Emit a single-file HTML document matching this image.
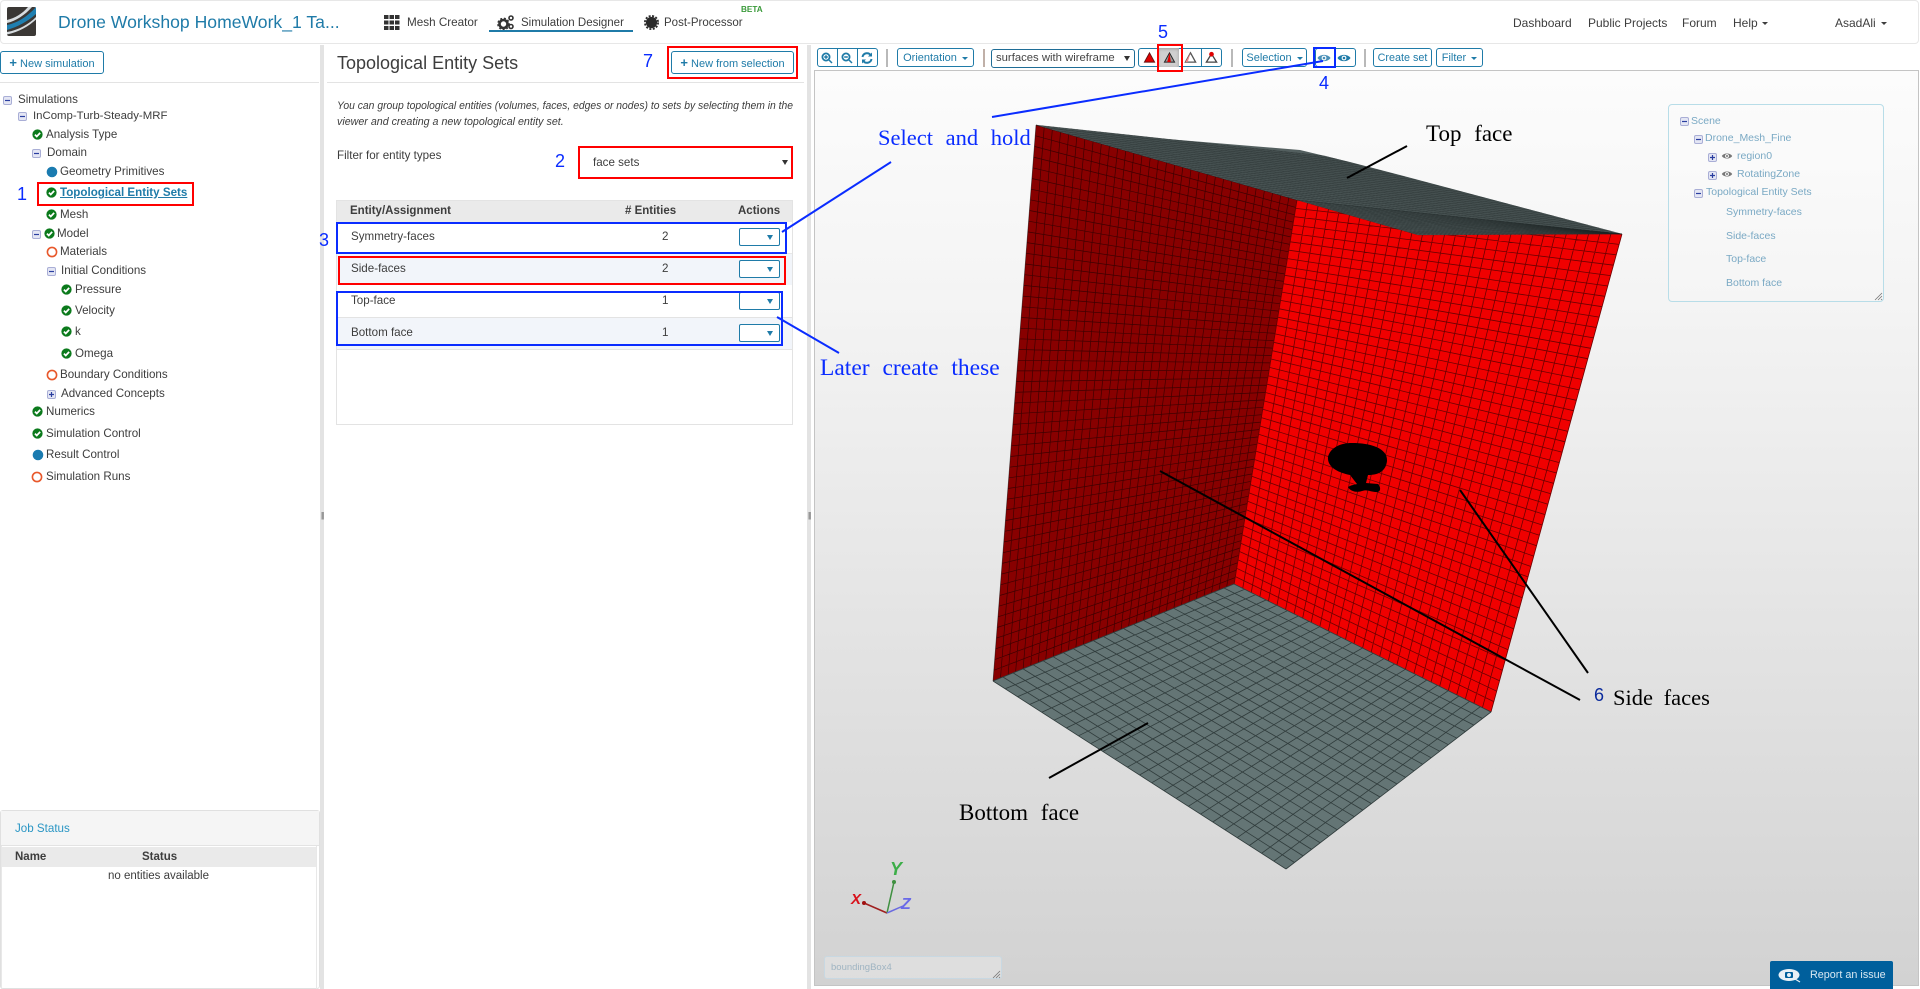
<!DOCTYPE html>
<html lang="en">
<head>
<meta charset="utf-8">
<title>Topological Entity Sets</title>
<style>
html,body{margin:0;padding:0;width:1920px;height:989px;overflow:hidden;background:#fff}
body{position:relative;font-family:"Liberation Sans",sans-serif;font-size:12px;color:#3d3d3d}
.a{position:absolute}
.t{position:absolute;white-space:nowrap;line-height:16px;height:16px}
.btn{position:absolute;box-sizing:border-box;border:1px solid #1f7ba8;border-radius:3px;color:#1f7ba8;background:#fff;white-space:nowrap;font-size:11px;text-align:center}
.ann{position:absolute;white-space:nowrap;font-family:"Liberation Serif",serif;line-height:26px;height:26px;font-size:22.500px;word-spacing:7px}
.num{position:absolute;white-space:nowrap;color:#0a2cff;font-size:18px;line-height:20px;height:20px}
.box{position:absolute;box-sizing:border-box;border:2px solid #0a2cff}
.red{border-color:#f00}
.dd{position:absolute;left:739px;width:41px;height:18px;box-sizing:border-box;border:1px solid #1f7ba8;border-radius:2px;background:#fff}
.dd:after{content:"";position:absolute;right:6px;top:6px;border-left:3px solid transparent;border-right:3px solid transparent;border-top:5px solid #1f7ba8}
.car{display:inline-block;width:0;height:0;border-left:3.5px solid transparent;border-right:3.5px solid transparent;border-top:3.5px solid currentColor;vertical-align:middle;margin-left:5px}
.sep{position:absolute;width:2px;height:18px;top:49px;background:#b9b9b9}
.lg{position:absolute;white-space:nowrap;color:#7aa9c4;font-size:10.5px;line-height:14px;height:14px}
.i{position:absolute;display:block}
</style>
</head>
<body>
<svg width="0" height="0" style="position:absolute">
<defs>
<symbol id="chk" viewBox="0 0 12 12"><circle cx="6" cy="6" r="5.6" fill="#0b7a1c"/><path d="M3.2 6.1 5.2 8.2 8.9 4.2" fill="none" stroke="#fff" stroke-width="1.9"/></symbol>
<symbol id="ring" viewBox="0 0 12 12"><circle cx="6" cy="6" r="4.6" fill="none" stroke="#e8582b" stroke-width="1.6"/></symbol>
<symbol id="dot" viewBox="0 0 12 12"><circle cx="6" cy="6" r="5.3" fill="#1a7bb0"/></symbol>
<symbol id="min" viewBox="0 0 9 9"><rect x=".5" y=".5" width="8" height="8" rx="1.5" fill="#e4e6f4" stroke="#a9aed6"/><path d="M2 4.5H7" stroke="#2a3ea0" stroke-width="1.2"/></symbol>
<symbol id="pls" viewBox="0 0 9 9"><rect x=".5" y=".5" width="8" height="8" rx="1.5" fill="#e4e6f4" stroke="#a9aed6"/><path d="M2 4.5H7M4.5 2V7" stroke="#2a3ea0" stroke-width="1.2"/></symbol>
<symbol id="eye" viewBox="0 0 14 10"><path d="M.5 5C3 .8 11 .8 13.500 5 11 9.200 3 9.200 .5 5Z" fill="currentColor"/><circle cx="7" cy="5" r="2.400" fill="#fff"/><circle cx="7" cy="5" r="1.300" fill="currentColor"/></symbol>
</defs>
</svg>

<!-- navbar -->
<div class="a" style="left:0;top:0;width:1919px;height:44px;box-sizing:border-box;border:1px solid #e7e7e7;border-radius:4px;background:#fff"></div>
<svg class="i" style="left:7px;top:7px" width="29" height="29" viewBox="0 0 29 29">
<rect width="29" height="29" rx="2" fill="#3b3835"/>
<path d="M0 18C10 16 20 10 29 0V7C20 15 10 20 0 23Z" fill="#1f7fb0"/>
<path d="M0 25C12 23 22 17 29 10V12.500C22 19 12 25 0 27.500Z" fill="#d8dde0"/>
<path d="M0 13C8 11 15 7 21 0H25C18 8 9 14 0 16Z" fill="#d8dde0"/>
</svg>
<div class="t" style="left:58px;top:14px;font-size:17.600px;color:#1f7ba8">Drone Workshop HomeWork_1 Ta...</div>

<svg class="i" style="left:384px;top:15px" width="16" height="15" viewBox="0 0 16 15" fill="#333">
<rect x="0" y="0" width="4.500" height="4"/><rect x="5.500" y="0" width="4.500" height="4"/><rect x="11" y="0" width="4.500" height="4"/>
<rect x="0" y="5.500" width="4.500" height="4"/><rect x="5.500" y="5.500" width="4.500" height="4"/><rect x="11" y="5.500" width="4.500" height="4"/>
<rect x="0" y="11" width="4.500" height="4"/><rect x="5.500" y="11" width="4.500" height="4"/><rect x="11" y="11" width="4.500" height="4"/>
</svg>
<div class="t" style="left:407px;top:15px;font-size:11.700px">Mesh Creator</div>
<svg class="i" style="left:497px;top:14px" width="18" height="17" viewBox="0 0 18 17">
<circle cx="6.500" cy="10" r="4" fill="none" stroke="#333" stroke-width="2.600"/><circle cx="6.500" cy="10" r="5.600" fill="none" stroke="#333" stroke-width="1.500" stroke-dasharray="2 1.800"/>
<circle cx="14" cy="4" r="2" fill="none" stroke="#333" stroke-width="1.600"/><circle cx="14" cy="12.500" r="2" fill="none" stroke="#333" stroke-width="1.600"/>
</svg>
<div class="t" style="left:521px;top:15px;font-size:11.500px">Simulation Designer</div>
<div class="a" style="left:489px;top:30px;width:144px;height:2px;background:#1f7ba8"></div>
<svg class="i" style="left:644px;top:15px" width="15" height="15" viewBox="0 0 15 15"><circle cx="7.500" cy="7.500" r="5.600" fill="#2a2a2a"/><circle cx="7.500" cy="7.500" r="6.600" fill="none" stroke="#2a2a2a" stroke-width="1.800" stroke-dasharray="2 1.500"/></svg>
<div class="t" style="left:664px;top:15px;font-size:11.500px">Post-Processor</div>
<div class="t" style="left:741px;top:2px;font-size:8.200px;color:#3a9a3a;font-weight:bold">BETA</div>

<div class="t" style="left:1513px;top:15px;font-size:12px">Dashboard</div>
<div class="t" style="left:1588px;top:15px;font-size:12px">Public Projects</div>
<div class="t" style="left:1682px;top:15px;font-size:12px">Forum</div>
<div class="t" style="left:1733px;top:15px;font-size:12px">Help<span class="car" style="margin-left:4px"></span></div>
<div class="t" style="left:1835px;top:15px;font-size:12px">AsadAli<span class="car"></span></div>

<!-- separators -->
<div class="a" style="left:320px;top:45px;width:4px;height:944px;background:#e3e3e3"></div>
<div class="a" style="left:807px;top:45px;width:4px;height:944px;background:#e3e3e3"></div>
<div class="t" style="left:321px;top:508px;font-size:8px;color:#555;letter-spacing:-1px">||</div>
<div class="t" style="left:808px;top:508px;font-size:8px;color:#555;letter-spacing:-1px">||</div>

<!-- left panel -->
<div class="btn" style="left:0;top:51px;width:104px;height:23px;line-height:21px"><b style="font-size:13px">+</b> New simulation</div>
<div class="a" style="left:0;top:82px;width:319px;height:1px;background:#e3e3e3"></div>

<svg class="i" style="left:3px;top:96px" width="9" height="9"><use href="#min"/></svg><div class="t" style="left:18px;top:92px;font-size:11.600px">Simulations</div>
<svg class="i" style="left:18px;top:112px" width="9" height="9"><use href="#min"/></svg><div class="t" style="left:33px;top:108px;font-size:11.400px">InComp-Turb-Steady-MRF</div>
<svg class="i" style="left:32px;top:129px" width="11" height="11"><use href="#chk"/></svg><div class="t" style="left:46px;top:127px;font-size:11.600px">Analysis Type</div>
<svg class="i" style="left:32px;top:149px" width="9" height="9"><use href="#min"/></svg><div class="t" style="left:47px;top:145px;font-size:11.600px">Domain</div>
<svg class="i" style="left:46px;top:166px" width="12" height="12"><use href="#dot"/></svg><div class="t" style="left:60px;top:164px;font-size:11.600px">Geometry Primitives</div>
<svg class="i" style="left:46px;top:187px" width="11" height="11"><use href="#chk"/></svg><div class="t" style="left:60px;top:185px;font-size:11.600px;font-weight:bold;color:#1f7ba8;text-decoration:underline">Topological Entity Sets</div>
<svg class="i" style="left:46px;top:209px" width="11" height="11"><use href="#chk"/></svg><div class="t" style="left:60px;top:207px;font-size:11.600px">Mesh</div>
<svg class="i" style="left:32px;top:230px" width="9" height="9"><use href="#min"/></svg><svg class="i" style="left:44px;top:228px" width="11" height="11"><use href="#chk"/></svg><div class="t" style="left:57px;top:226px;font-size:11.600px">Model</div>
<svg class="i" style="left:46px;top:246px" width="12" height="12"><use href="#ring"/></svg><div class="t" style="left:60px;top:244px;font-size:11.600px">Materials</div>
<svg class="i" style="left:47px;top:267px" width="9" height="9"><use href="#min"/></svg><div class="t" style="left:61px;top:263px;font-size:11.600px">Initial Conditions</div>
<svg class="i" style="left:61px;top:284px" width="11" height="11"><use href="#chk"/></svg><div class="t" style="left:75px;top:282px;font-size:11.600px">Pressure</div>
<svg class="i" style="left:61px;top:305px" width="11" height="11"><use href="#chk"/></svg><div class="t" style="left:75px;top:303px;font-size:11.600px">Velocity</div>
<svg class="i" style="left:61px;top:326px" width="11" height="11"><use href="#chk"/></svg><div class="t" style="left:75px;top:324px;font-size:11.600px">k</div>
<svg class="i" style="left:61px;top:348px" width="11" height="11"><use href="#chk"/></svg><div class="t" style="left:75px;top:346px;font-size:11.600px">Omega</div>
<svg class="i" style="left:46px;top:369px" width="12" height="12"><use href="#ring"/></svg><div class="t" style="left:60px;top:367px;font-size:11.600px">Boundary Conditions</div>
<svg class="i" style="left:47px;top:390px" width="9" height="9"><use href="#pls"/></svg><div class="t" style="left:61px;top:386px;font-size:11.600px">Advanced Concepts</div>
<svg class="i" style="left:32px;top:406px" width="11" height="11"><use href="#chk"/></svg><div class="t" style="left:46px;top:404px;font-size:11.600px">Numerics</div>
<svg class="i" style="left:32px;top:428px" width="11" height="11"><use href="#chk"/></svg><div class="t" style="left:46px;top:426px;font-size:11.600px">Simulation Control</div>
<svg class="i" style="left:32px;top:449px" width="12" height="12"><use href="#dot"/></svg><div class="t" style="left:46px;top:447px;font-size:11.600px">Result Control</div>
<svg class="i" style="left:31px;top:471px" width="12" height="12"><use href="#ring"/></svg><div class="t" style="left:46px;top:469px;font-size:11.600px">Simulation Runs</div>

<div class="box red" style="left:37px;top:182px;width:157px;height:24px"></div>
<div class="num" style="left:17px;top:184px">1</div>

<!-- job status -->
<div class="a" style="left:0;top:810px;width:320px;height:179px;box-sizing:border-box;border:1px solid #e0e0e0;border-radius:3px;background:#fff"></div>
<div class="a" style="left:1px;top:811px;width:318px;height:35px;background:#f5f5f5;border-bottom:1px solid #e3e3e3;box-sizing:border-box"></div>
<div class="t" style="left:15px;top:821px;font-size:11.600px;color:#2a96c4">Job Status</div>
<div class="a" style="left:2px;top:847px;width:314px;height:20px;background:#eaeaea"></div>
<div class="a" style="left:316px;top:846px;width:1px;height:143px;background:#e8e8e8"></div>
<div class="a" style="left:1px;top:846px;width:1px;height:143px;background:#e8e8e8"></div>
<div class="t" style="left:15px;top:849px;font-size:11.500px;font-weight:bold">Name</div>
<div class="t" style="left:142px;top:849px;font-size:11.500px;font-weight:bold">Status</div>
<div class="t" style="left:108px;top:868px;font-size:11.500px">no entities available</div>

<!-- middle panel -->
<div class="t" style="left:337px;top:55px;font-size:18px">Topological Entity Sets</div>
<div class="a" style="left:327px;top:82px;width:477px;height:1px;background:#e3e3e3"></div>
<div class="btn" style="left:671px;top:51px;width:123px;height:23px;line-height:21px"><b style="font-size:13px">+</b> New from selection</div>
<div class="box red" style="left:667px;top:46px;width:131px;height:33px"></div>
<div class="num" style="left:643px;top:51px">7</div>
<div class="t" style="left:337px;top:98px;font-size:11.300px;font-style:italic;transform:scaleX(.917);transform-origin:0 0">You can group topological entities (volumes, faces, edges or nodes) to sets by selecting them in the</div>
<div class="t" style="left:337px;top:114px;font-size:11.300px;font-style:italic;transform:scaleX(.945);transform-origin:0 0">viewer and creating a new topological entity set.</div>
<div class="t" style="left:337px;top:148px;font-size:11.600px">Filter for entity types</div>
<div class="box red" style="left:578px;top:146px;width:215px;height:33px"></div>
<div class="t" style="left:593px;top:155px;font-size:11.600px">face sets</div>
<div class="a" style="left:782px;top:160px;border-left:3px solid transparent;border-right:3px solid transparent;border-top:5px solid #333"></div>
<div class="num" style="left:555px;top:151px">2</div>

<div class="a" style="left:336px;top:200px;width:457px;height:225px;box-sizing:border-box;border:1px solid #e3e3e3"></div>
<div class="a" style="left:337px;top:201px;width:455px;height:21px;background:#eaeaea"></div>
<div class="a" style="left:337px;top:253px;width:455px;height:32px;background:#f2f5fa;border-top:1px solid #e8e8e8;box-sizing:border-box"></div>
<div class="a" style="left:337px;top:317px;width:455px;height:33px;background:#f2f5fa;border-top:1px solid #e3e3e3;border-bottom:1px solid #e3e3e3;box-sizing:border-box"></div>
<div class="t" style="left:350px;top:203px;font-size:11.500px;font-weight:bold">Entity/Assignment</div>
<div class="t" style="left:625px;top:203px;font-size:11.500px;font-weight:bold"># Entities</div>
<div class="t" style="left:738px;top:203px;font-size:11.500px;font-weight:bold">Actions</div>
<div class="t" style="left:351px;top:229px;font-size:11.600px">Symmetry-faces</div><div class="t" style="left:662px;top:229px;font-size:11.600px">2</div><div class="dd" style="top:228px"></div>
<div class="t" style="left:351px;top:261px;font-size:11.600px">Side-faces</div><div class="t" style="left:662px;top:261px;font-size:11.600px">2</div><div class="dd" style="top:260px"></div>
<div class="t" style="left:351px;top:293px;font-size:11.600px">Top-face</div><div class="t" style="left:662px;top:293px;font-size:11.600px">1</div><div class="dd" style="top:292px"></div>
<div class="t" style="left:351px;top:325px;font-size:11.600px">Bottom face</div><div class="t" style="left:662px;top:325px;font-size:11.600px">1</div><div class="dd" style="top:324px"></div>
<div class="box" style="left:336px;top:222px;width:451px;height:32px"></div>
<div class="box red" style="left:338px;top:256px;width:448px;height:29px"></div>
<div class="box" style="left:336px;top:291px;width:447px;height:55px"></div>
<div class="num" style="left:319px;top:230px">3</div>

<!-- toolbar -->
<div class="btn" style="left:817px;top:48px;width:61px;height:19px"></div>
<div class="a" style="left:837px;top:48px;width:1px;height:19px;background:#1f7ba8"></div>
<div class="a" style="left:857px;top:48px;width:1px;height:19px;background:#1f7ba8"></div>
<svg class="i" style="left:821px;top:52px" width="12" height="12" viewBox="0 0 12 12" fill="none" stroke="#1f7ba8" stroke-width="1.800"><circle cx="5" cy="5" r="3.600"/><path d="M8 8 11 11M3.200 5H6.800M5 3.200V6.800" stroke-width="1.500"/></svg>
<svg class="i" style="left:841px;top:52px" width="12" height="12" viewBox="0 0 12 12" fill="none" stroke="#1f7ba8" stroke-width="1.800"><circle cx="5" cy="5" r="3.600"/><path d="M8 8 11 11M3.200 5H6.800" stroke-width="1.500"/></svg>
<svg class="i" style="left:861px;top:52px" width="12" height="12" viewBox="0 0 12 12" fill="none" stroke="#1f7ba8" stroke-width="2"><path d="M1.500 5A4.600 4.600 0 0 1 10 3.500M10.500 7A4.600 4.600 0 0 1 2 8.500"/><path d="M11 .5V4.500H7M1 11.500V7.500H5" fill="#1f7ba8" stroke="none"/></svg>
<div class="sep" style="left:886px"></div>
<div class="btn" style="left:897px;top:48px;width:77px;height:19px;line-height:18px;font-size:11px">Orientation<span class="car"></span></div>
<div class="sep" style="left:983px;background:#c0b0a8"></div>
<div class="btn" style="left:991px;top:49px;width:144px;height:19px;line-height:17px;color:#444;text-align:left;padding-left:4px;font-size:11.300px;border-color:#1f6d96">surfaces with wireframe</div>
<div class="a" style="left:1124px;top:56px;border-left:3px solid transparent;border-right:3px solid transparent;border-top:5px solid #333"></div>
<div class="btn" style="left:1138px;top:48px;width:84px;height:19px"></div>
<div class="a" style="left:1158px;top:48px;width:21px;height:19px;background:#d0d0d0;box-shadow:inset 0 1px 3px #999"></div>
<div class="a" style="left:1201px;top:48px;width:1px;height:19px;background:#1f7ba8"></div>
<svg class="i" style="left:1143px;top:51px" width="13" height="13" viewBox="0 0 14 14"><path d="M7 2 12.500 12H1.500Z" fill="#e00000" stroke="#611" stroke-width="1"/></svg>
<svg class="i" style="left:1163px;top:51px" width="13" height="13" viewBox="0 0 14 14"><path d="M7 2 12.500 12H1.500Z" fill="#999" stroke="#222"/><path d="M7 2 8.500 12H4.500Z" fill="#e00000"/></svg>
<svg class="i" style="left:1184px;top:51px" width="13" height="13" viewBox="0 0 14 14"><path d="M7 2 12.500 12H1.500Z" fill="#fff" stroke="#555" stroke-width="1.400"/><path d="M7 2 1.500 12H4Z" fill="#e88"/></svg>
<svg class="i" style="left:1205px;top:51px" width="13" height="13" viewBox="0 0 14 14"><path d="M7 3 12.500 12H1.500Z" fill="#fff" stroke="#444" stroke-width="1.400"/><circle cx="7" cy="3.500" r="2.500" fill="#e00000"/></svg>
<div class="sep" style="left:1231px"></div>
<div class="btn" style="left:1242px;top:48px;width:65px;height:19px;line-height:18px;font-size:11px">Selection<span class="car"></span></div>
<div class="btn" style="left:1315px;top:48px;width:41px;height:19px"></div>
<svg class="i" style="left:1317px;top:53px;color:#4a90b8" width="14" height="10"><use href="#eye"/></svg>
<svg class="i" style="left:1337px;top:53px;color:#1f7ba8" width="14" height="10"><use href="#eye"/></svg>
<div class="sep" style="left:1364px"></div>
<div class="btn" style="left:1373px;top:48px;width:59px;height:19px;line-height:18px;font-size:10.800px">Create set</div>
<div class="btn" style="left:1436px;top:48px;width:47px;height:19px;line-height:18px;font-size:11px">Filter<span class="car"></span></div>

<!-- viewer -->
<div class="a" style="left:814px;top:70px;width:1105px;height:916px;box-sizing:border-box;border:1px solid #c4c4c4;background:linear-gradient(#fcfcfc,#f4f4f4 25%,#d2d2d2)"></div>
<svg class="a" style="left:0;top:0" width="1920" height="989" viewBox="0 0 1920 989">
<polygon points="1036,125 1297,200 1234,585 993,681" fill="#880000"/>
<path id="g1" fill="none" stroke="#000" stroke-width=".7" stroke-opacity=".55"/>
<polygon points="1297,200 1622,234 1491,712 1234,585" fill="#f00000"/>
<path id="g2" fill="none" stroke="#6b0000" stroke-width=".8"/>
<polygon points="993,681 1234,584 1491,712 1286,869" fill="#647575"/>
<path id="g3" fill="none" stroke="#303c3c" stroke-width=".8"/>
<polygon points="1036,125 1167,139 1300,150 1350,162 1400,175 1622,234 1418,235 1297,200" fill="#535f5f"/>
<path id="g4" fill="none" stroke="#1f2626" stroke-width=".5" stroke-opacity=".55"/>
<path d="M1328 457C1330 448 1340 443 1352 443 1370 443 1388 448 1387 461 1386 470 1380 475 1368 475L1366 483 1378 484C1381 487 1381 492 1377 492 1370 492 1368 489 1362 491 1356 493 1350 491 1348 487 1351 485 1354 485 1357 484L1350 475C1340 473 1327 468 1328 457Z" fill="#000"/>
<path d="M992 117 1323 61" stroke="#0a2cff" stroke-width="2"/>
<path d="M782 232 891 162" stroke="#0a2cff" stroke-width="2"/>
<path d="M777 317 839 353" stroke="#0a2cff" stroke-width="2"/>
<path d="M1407 146 1347 178" stroke="#000" stroke-width="2"/>
<path d="M1160 471 1580 700" stroke="#000" stroke-width="2"/>
<path d="M1460 490 1588 673" stroke="#000" stroke-width="2"/>
<path d="M1148 723 1049 778" stroke="#000" stroke-width="2"/>
<path d="M887 913 864 903" stroke="#a02020" stroke-width="1.500"/><circle cx="864" cy="903" r="2" fill="#a01010"/>
<path d="M887 913 894 882" stroke="#3f9040" stroke-width="1.500"/><circle cx="894" cy="882" r="2" fill="#3f9040"/>
<path d="M887 913 903 906" stroke="#6a6ae0" stroke-width="1.500"/>
<text x="851" y="904" font-family="Liberation Sans" font-size="15" font-weight="bold" font-style="italic" fill="#d8121c">X</text>
<text x="890" y="875" font-family="Liberation Sans" font-size="18" font-weight="bold" font-style="italic" fill="#3cae48">Y</text>
<text x="901" y="909" font-family="Liberation Sans" font-size="16" font-weight="bold" font-style="italic" fill="#6a6ae8">Z</text>
</svg>

<div class="box" style="left:1313px;top:47px;width:23px;height:21px"></div>
<div class="num" style="left:1319px;top:73px">4</div>
<div class="box red" style="left:1157px;top:44px;width:26px;height:28px"></div>
<div class="num" style="left:1158px;top:22px">5</div>

<div class="ann" style="left:878px;top:125px;color:#0a2cff">Select and hold</div>
<div class="ann" style="left:1426px;top:121px;color:#000;font-size:23px">Top face</div>
<div class="ann" style="left:1613px;top:685px;color:#000;font-size:22.500px;word-spacing:5px">Side faces</div>
<div class="ann" style="left:959px;top:800px;color:#000;font-size:23px">Bottom face</div>
<div class="ann" style="left:820px;top:355px;color:#0a2cff;font-size:23.500px">Later create these</div>
<div class="num" style="left:1594px;top:685px;color:#0a2a9c">6</div>

<!-- scene tree -->
<div class="a" style="left:1668px;top:104px;width:216px;height:198px;box-sizing:border-box;border:1px solid #b8dde8;border-radius:4px;background:rgba(255,255,255,.15)"></div>
<svg class="i" style="left:1680px;top:117px" width="9" height="9"><use href="#min"/></svg><div class="lg" style="left:1691px;top:114px">Scene</div>
<svg class="i" style="left:1694px;top:135px" width="9" height="9"><use href="#min"/></svg><div class="lg" style="left:1705px;top:131px">Drone_Mesh_Fine</div>
<svg class="i" style="left:1708px;top:153px" width="9" height="9"><use href="#pls"/></svg><svg class="i" style="left:1721px;top:152px;color:#777" width="12" height="8"><use href="#eye"/></svg><div class="lg" style="left:1737px;top:149px">region0</div>
<svg class="i" style="left:1708px;top:171px" width="9" height="9"><use href="#pls"/></svg><svg class="i" style="left:1721px;top:170px;color:#777" width="12" height="8"><use href="#eye"/></svg><div class="lg" style="left:1737px;top:167px">RotatingZone</div>
<svg class="i" style="left:1694px;top:189px" width="9" height="9"><use href="#min"/></svg><div class="lg" style="left:1706px;top:185px">Topological Entity Sets</div>
<div class="lg" style="left:1726px;top:205px">Symmetry-faces</div>
<div class="lg" style="left:1726px;top:229px">Side-faces</div>
<div class="lg" style="left:1726px;top:252px">Top-face</div>
<div class="lg" style="left:1726px;top:276px">Bottom face</div>
<svg class="i" style="left:1874px;top:292px" width="9" height="9" viewBox="0 0 9 9" stroke="#777" stroke-width=".8"><path d="M1 8 8 1M4 8 8 4M7 8 8 7"/></svg>

<!-- bounding box -->
<div class="a" style="left:824px;top:956px;width:178px;height:23px;box-sizing:border-box;border:1px solid #c8d8e2;border-radius:3px;background:rgba(255,255,255,.25)"></div>
<div class="lg" style="left:831px;top:961px;color:#9fb4c2;font-size:9.500px">boundingBox4</div>
<svg class="i" style="left:992px;top:970px" width="9" height="9" viewBox="0 0 9 9" stroke="#777" stroke-width=".8"><path d="M1 8 8 1M4 8 8 4M7 8 8 7"/></svg>

<!-- report -->
<div class="a" style="left:1770px;top:961px;width:123px;height:28px;background:#005f9c;border-radius:2px 2px 0 0"></div>
<svg class="i" style="left:1778px;top:968px" width="24" height="15" viewBox="0 0 24 15"><ellipse cx="11" cy="7" rx="10.500" ry="6" fill="#e8f0f6"/><rect x="7" y="4" width="8" height="6" rx="1" fill="#005f9c"/><circle cx="11" cy="7" r="2" fill="#e8f0f6"/><path d="M17 11 22 14" stroke="#e8f0f6" stroke-width="1.200"/></svg>
<div class="t" style="left:1810px;top:967px;font-size:10.800px;color:#d8e8f2">Report an issue</div>

<script>
function grid(id,qs,nu,nv){
  var d="";
  qs.forEach(function(q){
    function P(u,v){
      var x=(1-u)*(1-v)*q[0][0]+u*(1-v)*q[1][0]+u*v*q[2][0]+(1-u)*v*q[3][0];
      var y=(1-u)*(1-v)*q[0][1]+u*(1-v)*q[1][1]+u*v*q[2][1]+(1-u)*v*q[3][1];
      return x.toFixed(1)+" "+y.toFixed(1);
    }
    for(var i=0;i<=nu;i++){d+="M"+P(i/nu,0)+"L"+P(i/nu,1);}
    for(var j=0;j<=nv;j++){d+="M"+P(0,j/nv)+"L"+P(1,j/nv);}
  });
  document.getElementById(id).setAttribute("d",d);
}
grid("g1",[[[1036,125],[1297,200],[1234,585],[993,681]]],32,52);
grid("g2",[[[1297,200],[1622,234],[1491,712],[1234,585]]],30,46);
grid("g3",[[[993,681],[1234,584],[1491,712],[1286,869]]],24,24);
grid("g4",[[[1036,125],[1325,156],[1622,234],[1297,200]],[[1297,200],[1622,234],[1622,234],[1418,235]]],50,26);
</script>
</body>
</html>
